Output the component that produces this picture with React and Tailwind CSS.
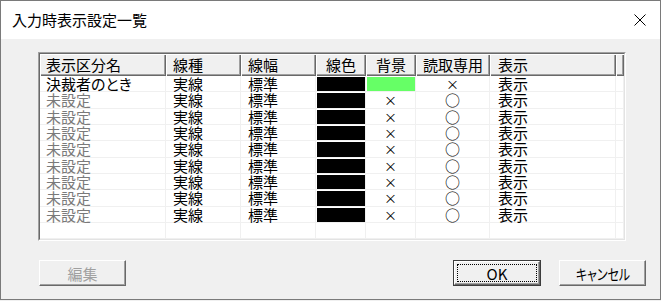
import React from 'react';

const font = "font-['Noto_Sans_CJK_JP','Noto_Sans',sans-serif] [font-feature-settings:'palt']";

const cols = [
  { w: 'w-[126px]', pad: 'pl-[6px]', align: 'justify-start' },
  { w: 'w-[75px]', pad: 'pl-[7px]', align: 'justify-start' },
  { w: 'w-[75px]', pad: 'pl-[7px]', align: 'justify-start' },
  { w: 'w-[50px]', pad: '', align: 'justify-center' },
  { w: 'w-[50px]', pad: '', align: 'justify-center' },
  { w: 'w-[74px]', pad: '', align: 'justify-center' },
  { w: 'w-[126px]', pad: 'pl-[8px]', align: 'justify-start' },
  { w: 'flex-1', pad: '', align: 'justify-start' },
];

const headers = ['表示区分名', '線種', '線幅', '線色', '背景', '読取専用', '表示', ''];

const rows = [
  { name: '決裁者のとき', set: true, bg: 'green', ro: '×' },
  ...Array.from({ length: 8 }, () => ({ name: '未設定', set: false, bg: '×', ro: '○' })),
];

function HeaderCell({ col, children }) {
  return (
    <div className={`${col.w} ${col.pad} ${col.align} flex items-center h-full bg-[#f0f0f0] shadow-[inset_1px_1px_0_#ffffff,inset_-1px_-1px_0_#696969,inset_-2px_-2px_0_#a0a0a0]`}>
      {children && <span className="leading-[16px]">{children}</span>}
    </div>
  );
}

function Cell({ col, children, className = '' }) {
  return (
    <div className={`${col.w} ${col.pad} ${col.align} flex items-center h-full border-r border-b border-[#f0f0f0] ${className}`}>
      {children}
    </div>
  );
}

function Txt({ children, className = '' }) {
  return <span className={`leading-[15px] ${className}`}>{children}</span>;
}

function Button({ children, isDefault, disabled }) {
  return (
    <div className={`h-[26px] ${isDefault ? 'w-[88px] border border-[#3c3c3c]' : 'w-[87px]'} flex`}>
      <div className="flex-1 flex border-t border-l border-white border-b border-r border-b-[#696969] border-r-[#696969] bg-[#f0f0f0] shadow-[inset_-1px_-1px_0_#a0a0a0]">
        <div className={`flex-1 flex items-center justify-center m-[2px] ${isDefault ? 'border border-dotted border-black' : ''}`}>
          <span className={`text-[15px] leading-none ${disabled ? 'text-[#a0a0a0]' : 'text-black'}`}>{children}</span>
        </div>
      </div>
    </div>
  );
}

export default function App() {
  return (
    <div className={`w-[661px] h-[301px] bg-[#f0f0f0] ${font}`}>
      <div className="h-[300px] border border-[#7a7a7a] flex flex-col">
        {/* title bar */}
        <div className="h-[38px] bg-white flex items-center justify-between pl-[11px] pr-[14px]">
          <span className="text-[15px] text-black">入力時表示設定一覧</span>
          <svg width="12" height="12" viewBox="0 0 12 12">
            <path d="M0.5 0.5 L11.5 11.5 M11.5 0.5 L0.5 11.5" stroke="#000" strokeWidth="1" fill="none" />
          </svg>
        </div>

        <div className="flex-1 flex flex-col pl-[37px] pr-[14px] pt-[13px]">
          {/* grid */}
          <div className="w-[588px] h-[189px] border border-t-[#a0a0a0] border-l-[#a0a0a0] border-b-white border-r-white flex">
            <div className="flex-1 flex flex-col bg-white border border-t-[#696969] border-l-[#696969] border-b-[#e3e3e3] border-r-[#e3e3e3] overflow-hidden text-[15px] text-black">
              <div className="h-[22px] flex shrink-0">
                {headers.map((h, i) => (
                  <HeaderCell key={i} col={cols[i]}>{h}</HeaderCell>
                ))}
              </div>
              {rows.map((r, i) => (
                <div key={i} className="h-[16.33px] flex shrink-0">
                  <Cell col={cols[0]}>
                    <Txt className={r.set ? 'text-black' : 'text-[#7a7a7a]'}>{r.name}</Txt>
                  </Cell>
                  <Cell col={cols[1]}><Txt>実線</Txt></Cell>
                  <Cell col={cols[2]}><Txt>標準</Txt></Cell>
                  <Cell col={cols[3]} className="pl-[1px] pt-[1px]">
                    <div className="w-full h-full bg-black" />
                  </Cell>
                  <Cell col={cols[4]} className={r.bg === 'green' ? 'pl-[1px] pt-[1px]' : ''}>
                    {r.bg === 'green' ? <div className="w-full h-full bg-[#66ff66]" /> : <Txt className="text-[13px]">×</Txt>}
                  </Cell>
                  <Cell col={cols[5]}>
                    <Txt className={r.ro === '×' ? 'text-[13px]' : 'text-[15px]'}>{r.ro}</Txt>
                  </Cell>
                  <Cell col={cols[6]}><Txt>表示</Txt></Cell>
                  <Cell col={cols[7]} />
                </div>
              ))}
              <div className="flex-1 flex">
                {cols.map((c, i) => (
                  <Cell key={i} col={c} />
                ))}
              </div>
            </div>
          </div>

          {/* buttons */}
          <div className="mt-[19px] flex items-center">
            <div className="ml-[1px]">
              <Button disabled>編集</Button>
            </div>
            <div className="ml-auto flex gap-[18px]">
              <Button isDefault>OK</Button>
              <Button><span className="inline-block scale-x-[0.8]">キャンセル</span></Button>
            </div>
          </div>
        </div>
      </div>
    </div>
  );
}
